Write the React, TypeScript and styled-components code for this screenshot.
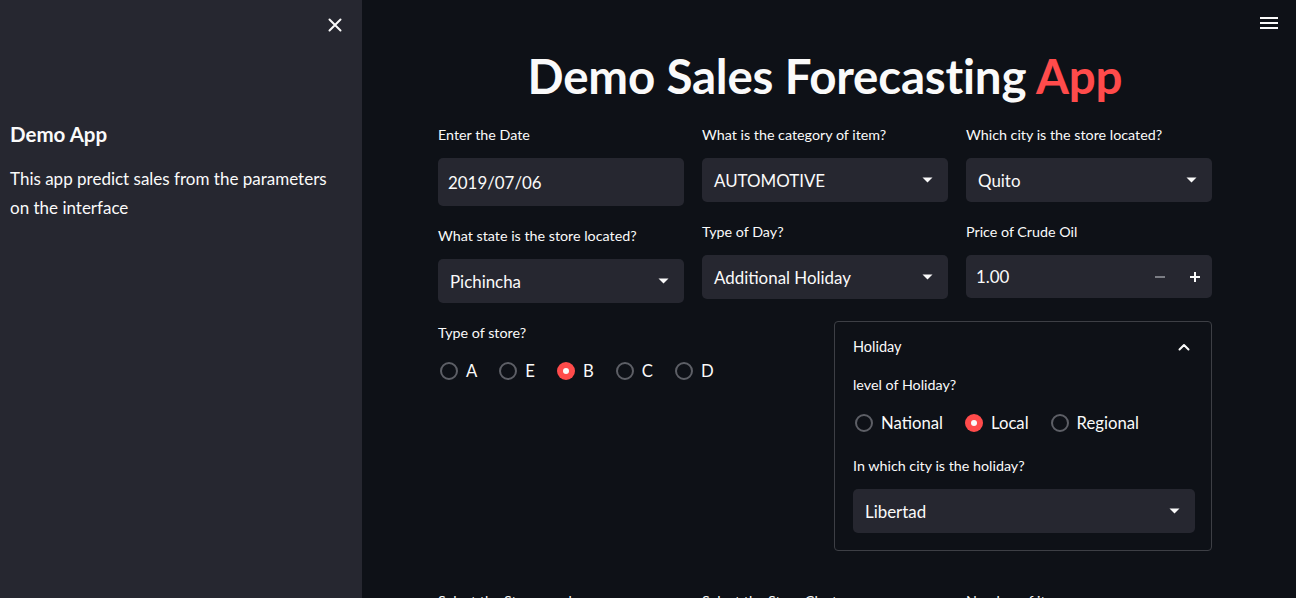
import React from "react";
import styled, { createGlobalStyle } from "styled-components";

const Global = createGlobalStyle`
  html, body { margin: 0; padding: 0; background: #0e1117; }
  body { font-family: Lato, "Noto Sans", sans-serif; color: #fafafa; }
  * { box-sizing: border-box; }
`;

const Page = styled.div`
  display: flex;
  width: 1296px;
  height: 598px;
  overflow: hidden;
  background: #0e1117;
`;

const Sidebar = styled.aside`
  width: 362px;
  flex: 0 0 362px;
  background: #262730;
  display: flex;
  flex-direction: column;
`;

const SidebarTop = styled.div`
  flex-shrink: 0;
  height: 50px;
  display: flex;
  align-items: center;
  justify-content: flex-end;
  padding-right: 20px;
`;

const IconButton = styled.div`
  display: flex;
  align-items: center;
  justify-content: center;
  width: 14px;
  height: 14px;
`;

const SideTitle = styled.h3`
  margin: 70px 0 0 10px;
  font-size: 20.5px;
  font-weight: 700;
  line-height: 28px;
`;

const SideText = styled.p`
  margin: 16px 0 0 10px;
  font-size: 17px;
  line-height: 29px;
  width: 340px;
`;

const Main = styled.main`
  flex: 1;
  display: flex;
  flex-direction: column;
  min-height: 0;
`;

const TopBar = styled.div`
  flex-shrink: 0;
  height: 45px;
  display: flex;
  align-items: center;
  justify-content: flex-end;
  padding-right: 18px;
`;

const Content = styled.div`
  flex-shrink: 0;
  margin-left: 76px;
  width: 774px;
  display: flex;
  flex-direction: column;
  gap: 18px;
`;

const Title = styled.h1`
  margin: 0;
  height: 60px;
  line-height: 62px;
  text-align: center;
  font-size: 47.5px;
  font-weight: 700;
  letter-spacing: -0.2px;
`;

const Accent = styled.span`
  color: #ff4b4b;
`;

const Grid = styled.div<{ $cols: number }>`
  display: grid;
  grid-template-columns: repeat(${(p) => p.$cols}, 1fr);
  column-gap: 18px;
  align-items: start;
`;

const Column = styled.div`
  display: flex;
  flex-direction: column;
  gap: 18px;
`;

const Field = styled.div`
  display: flex;
  flex-direction: column;
`;

const Label = styled.label`
  height: 24px;
  line-height: 24px;
  font-size: 14.3px;
  margin-bottom: 11px;
  white-space: nowrap;
`;

const Control = styled.div<{ $h: number }>`
  height: ${(p) => p.$h}px;
  background: #262730;
  border-radius: 5px;
  display: flex;
  align-items: center;
  font-size: 16.9px;
`;

const DateBox = styled(Control)`
  padding: 0 10px;
`;

const SelectBox = styled(Control)`
  justify-content: space-between;
  padding: 0 15px 0 12px;
`;

const NumberBox = styled(Control)`
  padding-left: 10px;
`;

const NumValue = styled.span`
  flex: 1;
`;

const StepButton = styled.div`
  width: 35px;
  height: 100%;
  display: flex;
  align-items: center;
  justify-content: center;
`;

const RadioRow = styled.div`
  height: 30px;
  display: flex;
  align-items: center;
  gap: 20px;
`;

const RadioItem = styled.div`
  display: flex;
  align-items: center;
  gap: 8px;
  padding-left: 2px;
  font-size: 16.7px;
`;

const Circle = styled.span<{ $on: boolean }>`
  width: 18px;
  height: 18px;
  border-radius: 50%;
  display: flex;
  align-items: center;
  justify-content: center;
  background: ${(p) => (p.$on ? "#ff4b4b" : "transparent")};
  border: ${(p) => (p.$on ? "none" : "2px solid #5d5f66")};
  &::after {
    content: "";
    display: ${(p) => (p.$on ? "block" : "none")};
    width: 6px;
    height: 6px;
    border-radius: 50%;
    background: #fafafa;
  }
`;

const Expander = styled.div`
  border: 1px solid #3d3f45;
  border-radius: 4px;
  display: flex;
  flex-direction: column;
`;

const ExpanderHeader = styled.div`
  height: 49px;
  display: flex;
  align-items: center;
  justify-content: space-between;
  padding: 0 21px 0 18px;
  font-size: 14.5px;
`;

const ExpanderBody = styled.div`
  display: flex;
  flex-direction: column;
  gap: 16px;
  padding: 2px 16px 17px 18px;
`;

const LastRow = styled(Grid)`
  margin-top: 20px;
`;

const Caret = () => (
  <svg width="11" height="6" viewBox="0 0 11 6">
    <path d="M0.5 0.5 L10.5 0.5 L5.5 5.5 Z" fill="#fafafa" />
  </svg>
);

const Select = ({ value }: { value: string }) => (
  <SelectBox $h={44}>
    <span>{value}</span>
    <Caret />
  </SelectBox>
);

const Radios = ({ options, selected }: { options: string[]; selected: string }) => (
  <RadioRow>
    {options.map((o) => (
      <RadioItem key={o}>
        <Circle $on={o === selected} />
        <span>{o}</span>
      </RadioItem>
    ))}
  </RadioRow>
);

export default function App() {
  return (
    <>
      <Global />
      <Page>
        <Sidebar>
          <SidebarTop>
            <IconButton>
              <svg width="14" height="14" viewBox="0 0 14 14">
                <path d="M1.5 1.5 L12.5 12.5 M12.5 1.5 L1.5 12.5" stroke="#fafafa" strokeWidth="2" strokeLinecap="round" />
              </svg>
            </IconButton>
          </SidebarTop>
          <SideTitle>Demo App</SideTitle>
          <SideText>This app predict sales from the parameters on the interface</SideText>
        </Sidebar>
        <Main>
          <TopBar>
            <svg width="18" height="14" viewBox="0 0 18 14">
              <rect x="0" y="1" width="18" height="2" fill="#fafafa" />
              <rect x="0" y="6" width="18" height="2" fill="#fafafa" />
              <rect x="0" y="11" width="18" height="2" fill="#fafafa" />
            </svg>
          </TopBar>
          <Content>
            <Title>
              Demo Sales Forecasting <Accent>App</Accent>
            </Title>
            <Grid $cols={3}>
              <Column>
                <Field>
                  <Label>Enter the Date</Label>
                  <DateBox $h={48}>2019/07/06</DateBox>
                </Field>
                <Field>
                  <Label>What state is the store located?</Label>
                  <Select value="Pichincha" />
                </Field>
              </Column>
              <Column>
                <Field>
                  <Label>What is the category of item?</Label>
                  <Select value="AUTOMOTIVE" />
                </Field>
                <Field>
                  <Label>Type of Day?</Label>
                  <Select value="Additional Holiday" />
                </Field>
              </Column>
              <Column>
                <Field>
                  <Label>Which city is the store located?</Label>
                  <Select value="Quito" />
                </Field>
                <Field>
                  <Label>Price of Crude Oil</Label>
                  <NumberBox $h={43}>
                    <NumValue>1.00</NumValue>
                    <StepButton>
                      <svg width="10" height="2" viewBox="0 0 10 2">
                        <rect x="0" y="0" width="10" height="2" fill="#7b7d84" />
                      </svg>
                    </StepButton>
                    <StepButton>
                      <svg width="10" height="10" viewBox="0 0 10 10">
                        <path d="M5 0 V10 M0 5 H10" stroke="#fafafa" strokeWidth="2" />
                      </svg>
                    </StepButton>
                  </NumberBox>
                </Field>
              </Column>
            </Grid>
            <Grid $cols={2}>
              <Field>
                <Label>Type of store?</Label>
                <Radios options={["A", "E", "B", "C", "D"]} selected="B" />
              </Field>
              <Expander>
                <ExpanderHeader>
                  <span>Holiday</span>
                  <svg width="12" height="8" viewBox="0 0 12 8">
                    <path d="M1.5 6.5 L6 2 L10.5 6.5" stroke="#fafafa" strokeWidth="2" fill="none" strokeLinecap="round" strokeLinejoin="round" />
                  </svg>
                </ExpanderHeader>
                <ExpanderBody>
                  <Field>
                    <Label>level of Holiday?</Label>
                    <Radios options={["National", "Local", "Regional"]} selected="Local" />
                  </Field>
                  <Field>
                    <Label>In which city is the holiday?</Label>
                    <Select value="Libertad" />
                  </Field>
                </ExpanderBody>
              </Expander>
            </Grid>
            <LastRow $cols={3}>
              <Label>Select the Store number</Label>
              <Label>Select the Store Cluster</Label>
              <Label>Number of items</Label>
            </LastRow>
          </Content>
        </Main>
      </Page>
    </>
  );
}
